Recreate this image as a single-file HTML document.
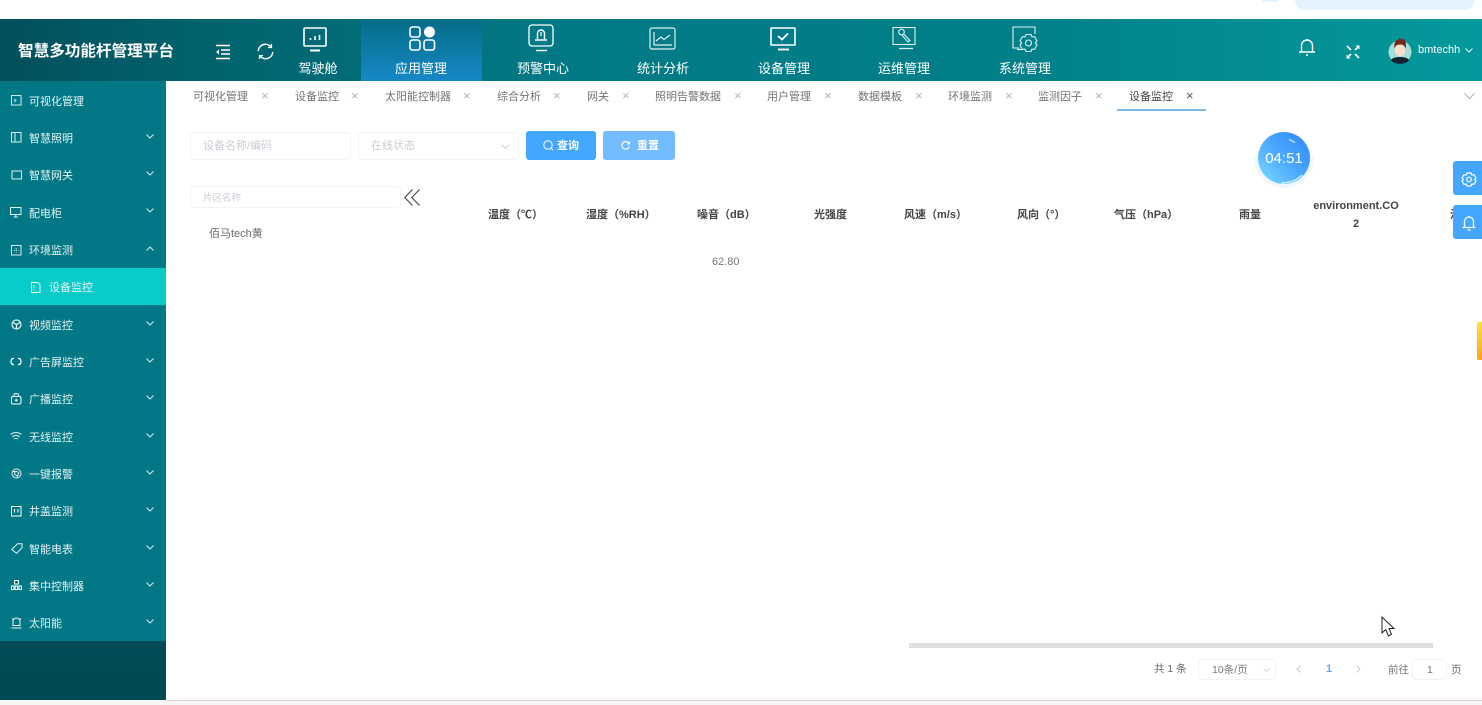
<!DOCTYPE html>
<html lang="zh"><head><meta charset="utf-8"><title>智慧多功能杆管理平台</title>
<style>
html,body{margin:0;padding:0;background:#fff}
body{width:1482px;height:705px;position:relative;overflow:hidden;font-family:"Liberation Sans","Noto Sans CJK SC",sans-serif;color:#666}
#w{position:absolute;left:0;top:0;width:1482px;height:705px;overflow:hidden;filter:blur(.35px)}
.a{position:absolute;white-space:nowrap}
svg{position:absolute;overflow:visible;fill:none}
.nav{position:absolute;top:61px;width:120px;text-align:center;font-size:13px;line-height:16px;color:#fff}
.side{position:absolute;left:29px;margin-top:1px;font-size:11px;line-height:14px;color:#e4f2f4;white-space:nowrap}
.tab{position:absolute;top:90px;font-size:11px;line-height:14px;color:#737373;white-space:nowrap}
.x{position:absolute;top:89px;font-size:13px;line-height:13px;color:#b4b4b4}
.th{position:absolute;top:208px;font-size:11px;line-height:15px;font-weight:bold;color:#444;white-space:nowrap}
.box{position:absolute;box-sizing:border-box;border:1px solid #f1f3f6;border-radius:4px;background:#fff}
</style></head><body><div id="w">

<div class="a" style="left:1295px;top:0;width:180px;height:10px;background:#e3f3fd;border-radius:0 0 14px 14px"></div>
<div class="a" style="left:1262px;top:0;width:16px;height:2px;background:#e3f3fd;border-radius:0 0 8px 8px"></div>

<!-- header -->
<div class="a" style="left:0;top:19px;width:1482px;height:62px;background:linear-gradient(90deg,#02505c 0,#02616c 190px,#027a85 560px,#027f88 1000px,#04999c 1482px)"></div>
<div class="a" style="left:361px;top:19px;width:121px;height:62px;background:linear-gradient(180deg,#046d87,#1688c6)"></div>
<div class="a" style="left:18px;top:42px;font-size:15.6px;line-height:20px;font-weight:bold;color:#fff">智慧多功能杆管理平台</div>

<svg style="left:215px;top:44px" width="16" height="16" stroke="#fff" stroke-width="1.4"><path d="M1 1.5H15M6 6H15M6 10H15M1 14.5H15"/><path d="M4 5.5L1 8L4 10.5Z" fill="#fff" stroke="none"/></svg>
<svg style="left:257px;top:43px" width="17" height="17" stroke="#fff" stroke-width="1.5"><path d="M1.2 8A7.2 7.2 0 0 1 14 4M15.8 9A7.2 7.2 0 0 1 3 13"/><path d="M14.5 1V4.5H11M2.5 16V12.6H6" stroke-width="1.2"/></svg>

<!-- nav icons -->
<svg style="left:303px;top:27px" width="24" height="26" stroke="#fff" stroke-width="1.6"><rect x="1" y="1" width="22" height="18" rx="1"/><path d="M7 23.5H17" stroke-width="2"/><path d="M7.5 11V13M12 9V13M16.5 8V13" stroke-width="1.6"/></svg>
<svg style="left:409px;top:26px" width="27" height="25" stroke="#fff" stroke-width="1.6"><rect x="1" y="1" width="10" height="10" rx="2.5"/><circle cx="20.5" cy="6" r="5.5" fill="#fff" stroke="none"/><rect x="1" y="14" width="10" height="10" rx="2.5"/><rect x="15" y="14" width="10.5" height="10" rx="2.5"/></svg>
<svg style="left:527px;top:24px" width="28" height="29" stroke="#fff" stroke-width="1.3"><rect x="2" y="1" width="24" height="21" rx="3"/><path d="M9 26.5H20" stroke-width="1.5"/><path d="M10.5 15V9.5A3.5 3.5 0 0 1 17.500 9.5V15M8 16H20" stroke-width="1.4"/><path d="M14 8V12" stroke-width="1.2"/></svg>
<svg style="left:649px;top:27px" width="28" height="23" stroke="#dff2f3" stroke-width="1.2"><rect x="1" y="1" width="25" height="21" rx="2"/><path d="M5 5V18H23M7 14L12 10L15 12.5L21 8"/></svg>
<svg style="left:770px;top:27px" width="27" height="24" stroke="#fff" stroke-width="1.6"><rect x="1" y="1" width="24" height="17" rx="0.5"/><path d="M8 9L12 12.5L18 6.5" stroke-width="1.8"/><path d="M8 22.5H19" stroke-width="1.8"/></svg>
<svg style="left:892px;top:26px" width="26" height="25" stroke="#dff2f3" stroke-width="1.1"><rect x="1" y="1.5" width="22" height="17"/><path d="M7 22.5H21" stroke-width="1.3"/><circle cx="9.5" cy="6" r="2.8"/><path d="M11.5 8L18 14.5L16 16L9.8 9"/></svg>
<svg style="left:1012px;top:26px" width="26" height="28" stroke="#dff2f3" stroke-width="1.1"><path d="M7.500 22H1V1H23V8"/><path d="M5 23.500H10" stroke-width="1.200"/><path d="M14 8.500H19L20 11L22.500 10.500L25 15L23.300 17L25 19L22.500 23.500L20 23L19 25.500H14L13 23L10.500 23.500L8 19L9.700 17L8 15L10.500 10.500L13 11Z" stroke-linejoin="round"/><circle cx="16.500" cy="17" r="3"/></svg>

<div class="nav" style="left:258px">驾驶舱</div>
<div class="nav" style="left:361px">应用管理</div>
<div class="nav" style="left:483px">预警中心</div>
<div class="nav" style="left:603px">统计分析</div>
<div class="nav" style="left:724px">设备管理</div>
<div class="nav" style="left:844px">运维管理</div>
<div class="nav" style="left:965px">系统管理</div>

<svg style="left:1298px;top:38px" width="18" height="18" stroke="#fff" stroke-width="1.4"><path d="M1 14H17M3.5 14V7.5A5.5 5.5 0 0 1 14.5 7.5V14M9 1V2"/><path d="M8 17H10" stroke-width="1.6"/></svg>
<svg style="left:1346px;top:45px" width="14" height="14" stroke="#fff" stroke-width="1.6"><path d="M1 1L5 5M13 1L9 5M1 13L5 9M13 13L9 9"/><path d="M9.5 0.5H13.5V4.5L9.5 0.5ZM0.5 9.5V13.5H4.5Z" fill="#fff" stroke="none"/></svg>
<svg style="left:1388px;top:37px" width="24" height="28"><circle cx="12" cy="15" r="11.500" fill="#a5e0d8"/><path d="M3 23C5 19 19 19 21 23C18 28 6 28 3 23Z" fill="#16232e"/><ellipse cx="12" cy="13" rx="5.200" ry="6.200" fill="#f8e0cc"/><path d="M6.500 11.500C5.500 6 8 2.500 10 3L12 0.500L13 2.500L16 2C18 4 18.500 8 17.500 11.500C16.500 8.500 15 7.500 12 7.500C9 7.500 7.500 8.500 6.500 11.500Z" fill="#74291c"/></svg>
<div class="a" style="left:1418px;top:43px;font-size:11px;line-height:14px;color:#fff">bmtechh</div>
<svg style="left:1465px;top:48px" width="8" height="5" stroke="#e6f5f5" stroke-width="1"><path d="M.5 .5L4 4L7.5 .5"/></svg>

<!-- sidebar -->
<div class="a" style="left:0;top:81px;width:166px;height:560px;background:#027886"></div>
<div class="a" style="left:0;top:641px;width:166px;height:60px;background:linear-gradient(180deg,#004b57,#004a55)"></div>
<div class="a" style="left:0;top:268px;width:166px;height:37px;background:#09cbc8"></div>

<div class="side" style="top:94px">可视化管理</div>
<div class="side" style="top:131px">智慧照明</div>
<div class="side" style="top:168px">智慧网关</div>
<div class="side" style="top:206px">配电柜</div>
<div class="side" style="top:243px">环境监测</div>
<div class="side" style="top:280px;left:49px">设备监控</div>
<div class="side" style="top:318px">视频监控</div>
<div class="side" style="top:355px">广告屏监控</div>
<div class="side" style="top:392px">广播监控</div>
<div class="side" style="top:430px">无线监控</div>
<div class="side" style="top:467px">一键报警</div>
<div class="side" style="top:504px">井盖监测</div>
<div class="side" style="top:542px">智能电表</div>
<div class="side" style="top:579px">集中控制器</div>
<div class="side" style="top:616px">太阳能</div>

<!-- sidebar icons -->
<svg style="left:11px;top:95px" width="11" height="11" stroke="#d5ecef" stroke-width="1"><rect x=".5" y=".5" width="9.5" height="9.5"/><path d="M3 4L5 5.5L3 7"/></svg>
<svg style="left:11px;top:132px" width="11" height="11" stroke="#e0f0f2" stroke-width="1"><rect x=".5" y=".5" width="9.5" height="9.5"/><path d="M4 .5V10"/></svg>
<svg style="left:11px;top:170px" width="11" height="11" stroke="#e0f0f2" stroke-width="1"><path d="M1 1H10.5V9H1ZM1 9V6"/></svg>
<svg style="left:10px;top:207px" width="12" height="11" stroke="#e0f0f2" stroke-width="1"><rect x=".5" y=".5" width="10.5" height="7"/><path d="M3.5 10H8M5.7 8V10"/></svg>
<svg style="left:11px;top:245px" width="11" height="11" stroke="#d5ecef" stroke-width="1"><rect x=".5" y=".5" width="9.5" height="9.5"/><path d="M5.2 3V7.5M3 5.2H7.5" stroke-dasharray="1 1"/></svg>
<svg style="left:31px;top:282px" width="10" height="11" stroke="#e9fbfa" stroke-width="1"><path d="M.5 .5H6.5L9 3V10.5H.5Z"/><path d="M3 3V8" stroke-dasharray="1 1"/></svg>
<svg style="left:11px;top:319px" width="11" height="11" stroke="#e0f0f2" stroke-width="1.2"><circle cx="5.5" cy="5.5" r="4.5"/><path d="M2 3.5L5.5 5.5L9 3.5M5.5 5.5V10"/></svg>
<svg style="left:10px;top:357px" width="12" height="9" stroke="#fff" stroke-width="1.3"><path d="M4 1.500Q1 1 1 4.500Q1 8 4 7.500M8 1.500Q11 1 11 4.500Q11 8 8 7.500"/></svg>
<svg style="left:11px;top:393px" width="11" height="12" stroke="#fff" stroke-width="1"><rect x=".5" y="3.5" width="9.5" height="7.5" rx="1.5"/><path d="M2.5 3.5L3.5 .8H7L8 3.5M3.7 7.2H6.8M5.2 5.7V8.7"/></svg>
<svg style="left:10px;top:432px" width="12" height="9" stroke="#e0f0f2" stroke-width="1"><path d="M.5 2.5Q6 -1.5 11.5 2.5M2.3 4.8Q6 2 9.700 4.800M4 7Q6 5.600 8 7"/></svg>
<svg style="left:11px;top:468px" width="11" height="11" stroke="#e0f0f2" stroke-width="1"><circle cx="5.500" cy="5.500" r="4.500"/><circle cx="5.500" cy="5.500" r="2"/><path d="M1.500 3.500H5M8 4.500L6 9.500"/></svg>
<svg style="left:11px;top:506px" width="11" height="11" stroke="#fff" stroke-width="1"><rect x=".5" y=".5" width="9.500" height="9.500"/><path d="M3.500 3V6.500M7 3V6.500"/></svg>
<svg style="left:11px;top:543px" width="12" height="11" stroke="#e8f4f5" stroke-width="1"><path d="M.8 6.500L6.500 .8H11V4.800L5.500 10.300Z"/></svg>
<svg style="left:11px;top:580px" width="11" height="11" stroke="#fff" stroke-width="1"><rect x="3.500" y=".5" width="4" height="3.500"/><rect x=".5" y="6" width="2.500" height="3.500"/><rect x="4.200" y="6" width="2.500" height="3.500"/><rect x="8" y="6" width="2.500" height="3.500"/></svg>
<svg style="left:11px;top:617px" width="11" height="12" stroke="#e8f4f5" stroke-width="1"><path d="M2 8.500V4.500A3.500 3.500 0 0 1 9 4.500V8.500ZM.5 11H10.500M1 1.500L2.500 3M10 1.500L8.500 3"/></svg>

<!-- chevrons -->
<svg style="left:146px;top:134px" width="8" height="5" stroke="#d5ecef"><path d="M.5 .5L4 4L7.500 .5"/></svg>
<svg style="left:146px;top:171px" width="8" height="5" stroke="#d5ecef"><path d="M.5 .5L4 4L7.500 .5"/></svg>
<svg style="left:146px;top:208px" width="8" height="5" stroke="#d5ecef"><path d="M.5 .5L4 4L7.500 .5"/></svg>
<svg style="left:146px;top:246px" width="8" height="5" stroke="#d5ecef"><path d="M.5 4.500L4 1L7.500 4.500"/></svg>
<svg style="left:146px;top:321px" width="8" height="5" stroke="#d5ecef"><path d="M.5 .5L4 4L7.500 .5"/></svg>
<svg style="left:146px;top:358px" width="8" height="5" stroke="#d5ecef"><path d="M.5 .5L4 4L7.500 .5"/></svg>
<svg style="left:146px;top:395px" width="8" height="5" stroke="#d5ecef"><path d="M.5 .5L4 4L7.500 .5"/></svg>
<svg style="left:146px;top:433px" width="8" height="5" stroke="#d5ecef"><path d="M.5 .5L4 4L7.500 .5"/></svg>
<svg style="left:146px;top:470px" width="8" height="5" stroke="#d5ecef"><path d="M.5 .5L4 4L7.500 .5"/></svg>
<svg style="left:146px;top:507px" width="8" height="5" stroke="#d5ecef"><path d="M.5 .5L4 4L7.500 .5"/></svg>
<svg style="left:146px;top:545px" width="8" height="5" stroke="#d5ecef"><path d="M.5 .5L4 4L7.500 .5"/></svg>
<svg style="left:146px;top:582px" width="8" height="5" stroke="#d5ecef"><path d="M.5 .5L4 4L7.500 .5"/></svg>
<svg style="left:146px;top:619px" width="8" height="5" stroke="#d5ecef"><path d="M.5 .5L4 4L7.500 .5"/></svg>

<!-- tabs -->
<div class="tab" style="left:193px">可视化管理</div><div class="x" style="left:261px">×</div>
<div class="tab" style="left:295px">设备监控</div><div class="x" style="left:351px">×</div>
<div class="tab" style="left:385px">太阳能控制器</div><div class="x" style="left:463px">×</div>
<div class="tab" style="left:497px">综合分析</div><div class="x" style="left:553px">×</div>
<div class="tab" style="left:587px">网关</div><div class="x" style="left:622px">×</div>
<div class="tab" style="left:655px">照明告警数据</div><div class="x" style="left:734px">×</div>
<div class="tab" style="left:767px">用户管理</div><div class="x" style="left:824px">×</div>
<div class="tab" style="left:858px">数据模板</div><div class="x" style="left:915px">×</div>
<div class="tab" style="left:948px">环境监测</div><div class="x" style="left:1005px">×</div>
<div class="tab" style="left:1038px">监测因子</div><div class="x" style="left:1095px">×</div>
<div class="tab" style="left:1129px;color:#444">设备监控</div><div class="x" style="left:1186px;color:#555">×</div>
<div class="a" style="left:1117px;top:109px;width:89px;height:2px;background:#7ab8ec"></div>
<svg style="left:1464px;top:93px" width="11" height="7" stroke="#aaa" stroke-width="1"><path d="M.5 .5L5.500 5.500L10.500 .5"/></svg>

<!-- filters -->
<div class="box" style="left:190px;top:132px;width:161px;height:28px"></div>
<div class="a" style="left:203px;top:139px;font-size:11px;line-height:15px;color:#c9cdd3">设备名称/编码</div>
<div class="box" style="left:358px;top:132px;width:161px;height:28px"></div>
<div class="a" style="left:371px;top:139px;font-size:11px;line-height:15px;color:#c9cdd3">在线状态</div>
<svg style="left:501px;top:144px" width="9" height="6" stroke="#d4d7dc"><path d="M.5 .5L4.500 4.500L8.500 .5"/></svg>
<div class="a" style="left:526px;top:131px;width:70px;height:29px;background:#43a7ff;border-radius:3px"></div>
<svg style="left:543px;top:140px" width="11" height="11" stroke="#fff" stroke-width="1"><circle cx="5" cy="5" r="4.200"/><path d="M8 8L10 10"/></svg>
<div class="a" style="left:557px;top:139px;font-size:11px;line-height:15px;font-weight:bold;color:#fff">查询</div>
<div class="a" style="left:603px;top:131px;width:72px;height:29px;background:#72bcff;border-radius:3px"></div>
<svg style="left:621px;top:141px" width="9" height="9" stroke="#fff" stroke-width="1.100"><path d="M8 2.500A3.800 3.800 0 1 0 8.300 5.500M8.300 .5V3H6"/></svg>
<div class="a" style="left:637px;top:139px;font-size:11px;line-height:15px;font-weight:bold;color:#fff">重置</div>

<div class="box" style="left:190px;top:186px;width:211px;height:22px"></div>
<div class="a" style="left:203px;top:192px;font-size:9.500px;line-height:13px;color:#c9cdd3">片区名称</div>
<svg style="left:404px;top:189px" width="17" height="17" stroke="#444" stroke-width="1.100"><path d="M8.500 .5L.8 8.500L8.500 16.500M15.500 .5L7.800 8.500L15.500 16.500"/></svg>
<div class="a" style="left:209px;top:226px;margin-top:1px;font-size:11px;line-height:14px;color:#6a6a6a">佰马tech黄</div>

<!-- table headers -->
<div class="th" style="left:488px">温度（℃）</div>
<div class="th" style="left:586px">湿度（%RH）</div>
<div class="th" style="left:697px">噪音（dB）</div>
<div class="th" style="left:814px">光强度</div>
<div class="th" style="left:904px">风速（m/s）</div>
<div class="th" style="left:1017px">风向（°）</div>
<div class="th" style="left:1114px">气压（hPa）</div>
<div class="th" style="left:1239px">雨量</div>
<div class="th" style="left:1313px;top:197px;width:86px;text-align:center;white-space:normal;word-break:break-all;line-height:18px">environment.CO2</div>
<div class="th" style="left:1450px">温</div>
<div class="a" style="left:712px;top:255px;font-size:11px;line-height:14px;color:#777">62.80</div>

<!-- timer -->
<div class="a" style="left:1254px;top:156px;width:60px;height:32px;border-radius:0 0 32px 32px;background:#eef8fe"></div>
<div class="a" style="left:1258px;top:132px;width:52px;height:52px;border-radius:50%;background:linear-gradient(45deg,#78d8ff 5%,#4aa8ff 50%,#2f87f8 100%)"></div>
<div class="a" style="left:1258px;top:150px;width:52px;text-align:center;font-size:15px;line-height:18px;color:#fff">04:51</div>
<svg style="left:1258px;top:132px" width="52" height="52" stroke="#dff2ff" stroke-width="1.200"><path d="M31 7.500L37 10.500"/><path d="M23 51Q36 51 44 43" stroke-width="1.500" stroke="#c7efff"/></svg>

<!-- right float -->
<div class="a" style="left:1453px;top:161px;width:29px;height:34px;background:#43a7ff;border-radius:3px 0 0 3px"></div>
<div class="a" style="left:1453px;top:205px;width:29px;height:34px;background:#43a7ff;border-radius:3px 0 0 3px"></div>
<svg style="left:1462px;top:172px" width="14" height="15" stroke="#fff" stroke-width="1.200"><path d="M5 1H9L9.800 3L12 2.700L14 6L12.600 7.500L14 9L12 12.300L9.800 12L9 14H5L4.200 12L2 12.300L0 9L1.400 7.500L0 6L2 2.700L4.200 3Z" stroke-linejoin="round"/><circle cx="7" cy="7.500" r="2.300"/></svg>
<svg style="left:1462px;top:215px" width="14" height="16" stroke="#fff" stroke-width="1.300"><path d="M.5 12.500H13.500M2.500 12.500V6.500A4.500 4.500 0 0 1 11.500 6.500V12.500M7 1V2M5.500 15H8.500"/></svg>
<div class="a" style="left:1477px;top:322px;width:5px;height:38px;background:linear-gradient(180deg,#ffdf3f,#ffa51a);border-radius:2px 0 0 2px"></div>

<!-- scrollbar -->
<div class="a" style="left:909px;top:643px;width:524px;height:5px;background:#dedede"></div>

<!-- cursor -->
<svg style="left:1381px;top:616px" width="15" height="22" stroke="#222" stroke-width="1"><path d="M1 1V17L4.800 13.500L7.500 20L10.500 18.500L8 12.500H13Z" fill="#fff"/></svg>

<!-- pagination -->
<div class="a" style="left:1154px;top:662px;font-size:10.500px;line-height:15px;color:#666">共 1 条</div>
<div class="box" style="left:1198px;top:659px;width:78px;height:21px"></div>
<div class="a" style="left:1212px;top:663px;font-size:10.500px;line-height:15px;color:#777">10条/页</div>
<svg style="left:1263px;top:668px" width="7" height="5" stroke="#d4d7dc"><path d="M.5 .5L3.500 3.500L6.500 .5"/></svg>
<svg style="left:1296px;top:665px" width="5" height="8" stroke="#c9cdd3"><path d="M4.500 .5L1 4L4.500 7.500"/></svg>
<div class="a" style="left:1326px;top:662px;font-size:11px;line-height:15px;font-weight:bold;color:#66a9e8">1</div>
<svg style="left:1356px;top:665px" width="5" height="8" stroke="#c9cdd3"><path d="M.5 .5L4 4L.5 7.500"/></svg>
<div class="a" style="left:1388px;top:663px;font-size:10.500px;line-height:15px;color:#777">前往</div>
<div class="box" style="left:1412px;top:659px;width:35px;height:21px"></div>
<div class="a" style="left:1427px;top:663px;font-size:10.500px;line-height:15px;color:#777">1</div>
<div class="a" style="left:1451px;top:663px;font-size:10.500px;line-height:15px;color:#666">页</div>

<!-- bottom edge -->
<div class="a" style="left:0;top:700px;width:1482px;height:5px;background:#f7f5f5"></div>
<div class="a" style="left:166px;top:700px;width:1316px;height:1px;background:#e8d4cf"></div>
</div></body></html>
